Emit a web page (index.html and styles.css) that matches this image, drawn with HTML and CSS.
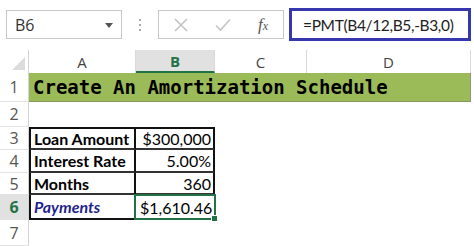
FILE: index.html
```html
<!DOCTYPE html>
<html>
<head>
  <title>Create An Amortization Schedule</title>
  <meta name="viewport" content="width=device-width, initial-scale=1.0">
  <link rel="stylesheet" href="styles.css">
</head>
<body>
  <div class="toolbar">
    <div class="namebox">
      <span>B6</span>
      <svg class="drop" width="8" height="5" viewBox="0 0 8 5"><path d="M0 0H8L4 5Z" fill="#555"/></svg>
    </div>
    <div class="grip"><i></i><i></i><i></i></div>
    <div class="btns">
      <svg width="14" height="14" viewBox="0 0 14 14"><path d="M1 1L13 13M13 1L1 13" stroke="#c4c4c4" stroke-width="1.6"/></svg>
      <svg width="16" height="14" viewBox="0 0 16 14"><path d="M1 7.5L5.5 12L15 1.5" stroke="#c4c4c4" stroke-width="1.6" fill="none"/></svg>
      <span class="fx"><i>f</i><small>x</small></span>
    </div>
    <div class="formula">=PMT(B4/12,B5,-B3,0)</div>
  </div>

  <div class="sheet">
    <div class="corner"><span></span></div>
    <div class="colhead">A</div>
    <div class="colhead sel">B</div>
    <div class="colhead">C</div>
    <div class="colhead">D</div>
    <div class="pad"></div>

    <div class="rowhead">1</div>
    <div class="title">Create An Amortization Schedule</div>
    <div class="pad"></div>

    <div class="rowhead">2</div>
    <div class="blank wide"></div>

    <div class="rowhead">3</div>
    <div class="cell label top">Loan Amount</div>
    <div class="cell num top">$300,000</div>
    <div class="blank rest"></div>

    <div class="rowhead">4</div>
    <div class="cell label">Interest Rate</div>
    <div class="cell num">5.00%</div>
    <div class="blank rest"></div>

    <div class="rowhead">5</div>
    <div class="cell label">Months</div>
    <div class="cell num">360</div>
    <div class="blank rest"></div>

    <div class="rowhead sel">6</div>
    <div class="cell label pay">Payments</div>
    <div class="cell num active">$1,610.46<span class="handle"></span></div>
    <div class="blank rest"></div>

    <div class="rowhead">7</div>
    <div class="blank wide"></div>
  </div>
</body>
</html>
```

FILE: styles.css
```css
body {
  margin: 0;
  background: #fff;
  font-family: Lato, "Liberation Sans", sans-serif;
  color: #000;
  overflow: hidden;
}

/* formula bar */
.toolbar {
  height: 50px;
  display: flex;
  align-items: flex-start;
  padding-left: 6px;
}
.namebox {
  margin-top: 10px;
  width: 116px;
  height: 29px;
  box-sizing: border-box;
  border: 1px solid #c8c8c8;
  display: flex;
  align-items: center;
  justify-content: space-between;
  padding: 0 8px 0 8px;
  font-family: "Open Sans", sans-serif;
  font-size: 16px;
  color: #333;
}
.namebox .drop {
  margin-top: 1px;
}
.grip {
  width: 36px;
  margin-top: 19px;
  display: flex;
  flex-direction: column;
  align-items: center;
  gap: 3px;
}
.grip i {
  width: 2px;
  height: 2px;
  background: #a8a8a8;
}
.btns {
  margin-top: 10px;
  width: 126px;
  height: 29px;
  box-sizing: border-box;
  border: 1px solid #c8c8c8;
  display: flex;
  align-items: center;
  padding-left: 15px;
  gap: 27px;
}
.fx {
  font-family: "Liberation Serif", serif;
  font-style: italic;
  color: #555;
  font-size: 17px;
}
.fx small {
  font-size: 12px;
}
.formula {
  margin-top: 8px;
  margin-left: 5px;
  width: 182px;
  height: 33px;
  box-sizing: border-box;
  border: 3px solid #3636ad;
  padding-left: 11px;
  display: flex;
  align-items: center;
  font-size: 15.5px;
  letter-spacing: -0.35px;
  color: #222;
}

/* grid */
.sheet {
  display: grid;
  grid-template-columns: 29px 107px 79px 92px 164px 1fr;
  grid-template-rows: 23px 29px 25px 23px 23px 22px 25px 26px;
}
.corner {
  border-right: 1px solid #d4d4d4;
  position: relative;
}
.corner span {
  position: absolute;
  right: 3px;
  bottom: 3px;
  width: 0;
  height: 0;
  border-left: 13px solid transparent;
  border-bottom: 13px solid #dcdcdc;
}
.colhead {
  border-right: 1px solid #d9d9d9;
  display: flex;
  align-items: center;
  justify-content: center;
  font-family: "Open Sans", sans-serif;
  font-size: 15px;
  color: #444;
}
.colhead.sel {
  background: #e1e1e1;
  color: #217346;
  font-weight: bold;
  border-bottom: 2px solid #217346;
}
.rowhead {
  grid-column: 1;
  border-right: 1px solid #d4d4d4;
  border-bottom: 1px solid #e2e2e2;
  display: flex;
  align-items: center;
  justify-content: center;
  font-family: "Open Sans", sans-serif;
  font-size: 16px;
  color: #555;
  background: #fff;
}
.rowhead.sel {
  background: #e1e1e1;
  color: #217346;
  font-weight: bold;
}
.title {
  grid-column: 2 / 6;
  background: #9bbb59;
  border-right: 1px solid #8a9a74;
  border-bottom: 1px solid #87985f;
  font-family: "DejaVu Sans Mono", monospace;
  font-weight: bold;
  font-size: 19px;
  display: flex;
  align-items: flex-end;
  padding: 0 0 3px 4px;
}
.pad {
  grid-column: 6;
}
.wide {
  grid-column: 2 / 7;
}
.rest {
  grid-column: 4 / 7;
}
.cell {
  display: flex;
  align-items: center;
  font-size: 16px;
  border-bottom: 2px solid #333;
  border-right: 2px solid #111;
  padding: 0 2px 0 3px;
  position: relative;
}
.cell.top {
  border-top: 2px solid #111;
}
.cell.label {
  border-left: 2px solid #111;
  font-weight: bold;
}
.cell.num {
  justify-content: flex-end;
}
.cell.pay {
  font-style: italic;
  color: #1f1f8c;
  border-bottom-color: #111;
}
.cell.active {
  justify-content: flex-start;
  border: 2px solid #217346;
  margin: -1px -1px 0 -2px;
  padding-left: 4px;
}
.handle {
  position: absolute;
  right: -4px;
  bottom: -4px;
  width: 5px;
  height: 5px;
  background: #217346;
  border: 1px solid #fff;
}
```
